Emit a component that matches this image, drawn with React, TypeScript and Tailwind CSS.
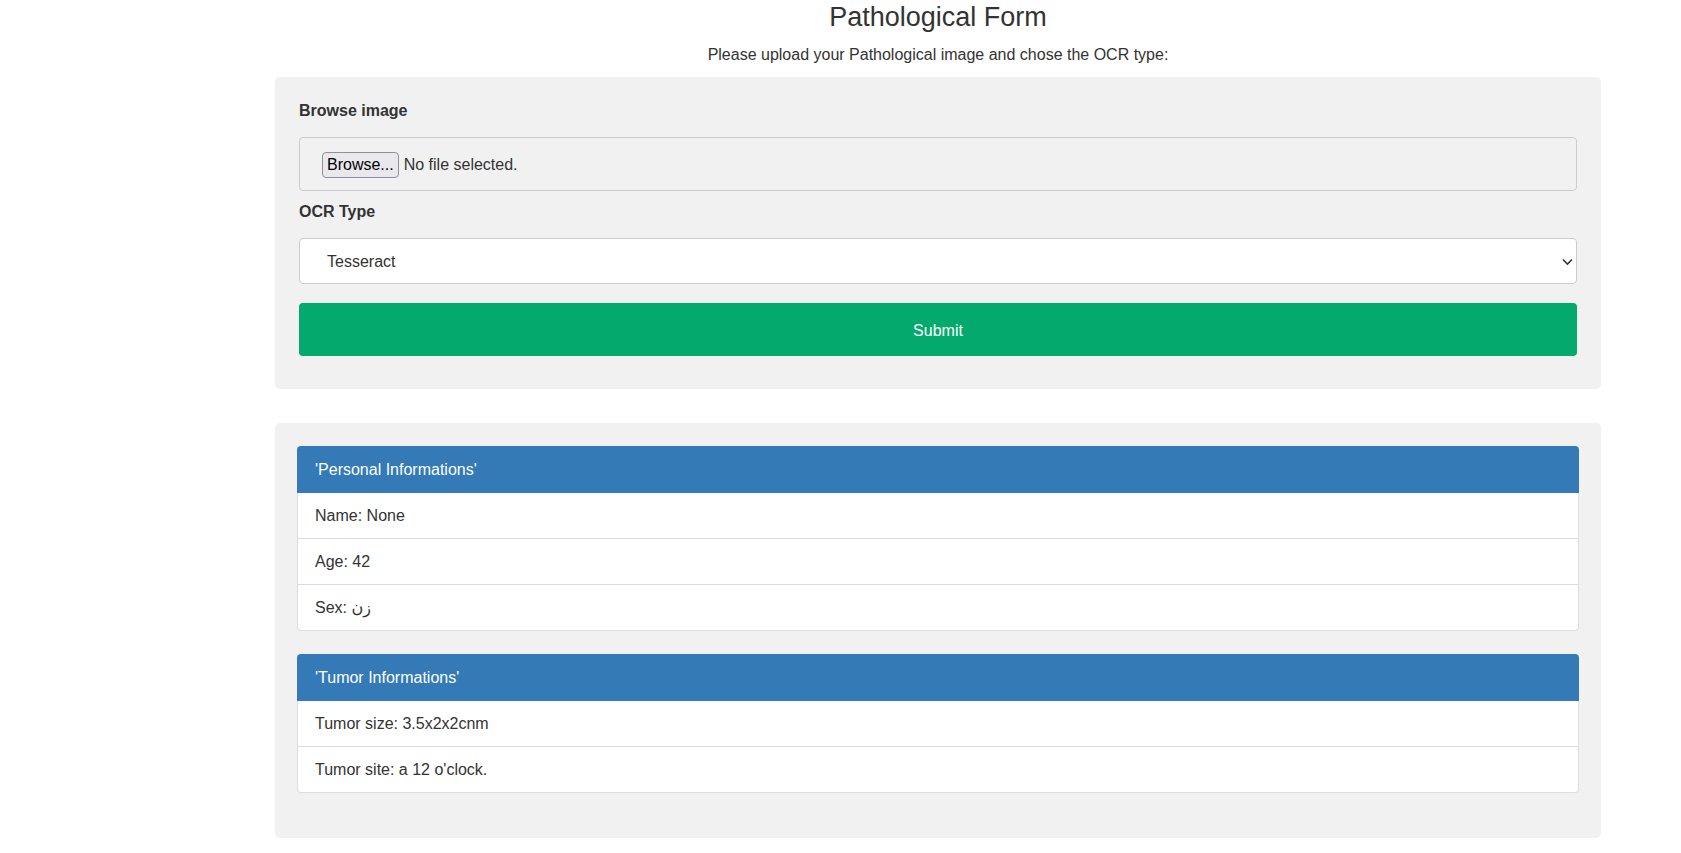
import { useState } from "react";

const font = { fontFamily: '"Liberation Sans", "DejaVu Sans", Arial, sans-serif' };

function InfoPanel({ title, rows }: { title: string; rows: string[] }) {
  return (
    <div>
      <div className="flex h-[47px] items-center rounded-t-[4px] bg-[#337ab7] px-[18px] text-[16px] text-white">
        {title}
      </div>
      <div className="rounded-b-[4px] border-x border-b border-[#dddddd] bg-white">
        {rows.map((r, i) => (
          <div
            key={r}
            className={`flex h-[45px] items-center px-[17px] text-[16px] text-[#333] ${
              i > 0 ? "border-t border-[#dddddd] h-[46px]" : ""
            }`}
          >
            {r}
          </div>
        ))}
      </div>
    </div>
  );
}

export default function App() {
  const [ocr, setOcr] = useState("tesseract");

  return (
    <div className="min-h-[853px] bg-white pb-10" style={font}>
      <div className="ml-[275px] w-[1326px]">
        <h1 className="mt-[1px] text-center text-[27px] font-normal leading-[32px] text-[#333]">
          Pathological Form
        </h1>
        <p className="mt-[12px] text-center text-[16px] leading-[20px] text-[#333]">
          Please upload your Pathological image and chose the OCR type:
        </p>

        {/* upload form */}
        <form
          className="mt-[12px] rounded-[5px] bg-[#f1f1f1] px-[24px] pb-[33px] pt-[24px]"
          onSubmit={(e) => e.preventDefault()}
        >
          <label className="block text-[16px] font-bold leading-[20px] text-[#333]">Browse image</label>
          <label className="mt-[16px] flex h-[54px] cursor-pointer items-center rounded-[4px] border border-[#cccccc] bg-[#f1f1f1] pl-[22px] pt-[2px] text-[16px] text-[#333]">
            <input type="file" className="hidden" />
            <span className="rounded-[4px] border border-[#8f8f9d] bg-[#e9e9ed] px-[4px] text-[16px] leading-[24px] text-black">
              Browse...
            </span>
            <span className="ml-[5px]">No file selected.</span>
          </label>

          <label className="mt-[11px] block text-[16px] font-bold leading-[20px] text-[#333]">OCR Type</label>
          <div className="relative mt-[16px]">
            <select
              value={ocr}
              onChange={(e) => setOcr(e.target.value)}
              className="h-[46px] w-full appearance-none rounded-[4px] border border-[#cccccc] bg-white pl-[27px] pt-[2px] text-[16px] text-[#333] outline-none"
              style={font}
            >
              <option value="tesseract">Tesseract</option>
              <option value="easyocr">EasyOCR</option>
            </select>
            <svg
              className="pointer-events-none absolute right-[4px] top-[20px]"
              width="11"
              height="8"
              viewBox="0 0 11 8"
              fill="none"
            >
              <path d="M1 1.5 5.5 6 10 1.5" stroke="#333" strokeWidth="1.6" />
            </svg>
          </div>

          <button
            type="submit"
            className="mt-[19px] h-[53px] w-full rounded-[4px] bg-[#04aa6d] pt-[2px] text-[16px] text-white"
          >
            Submit
          </button>
        </form>

        {/* results */}
        <div className="mt-[34px] rounded-[5px] bg-[#f1f1f1] px-[22px] pb-[45px] pt-[23px]">
          <InfoPanel title="'Personal Informations'" rows={["Name: None", "Age: 42", "Sex: زن"]} />
          <div className="mt-[23px]">
            <InfoPanel title="'Tumor Informations'" rows={["Tumor size: 3.5x2x2cnm", "Tumor site: a 12 o'clock."]} />
          </div>
        </div>
      </div>
    </div>
  );
}
